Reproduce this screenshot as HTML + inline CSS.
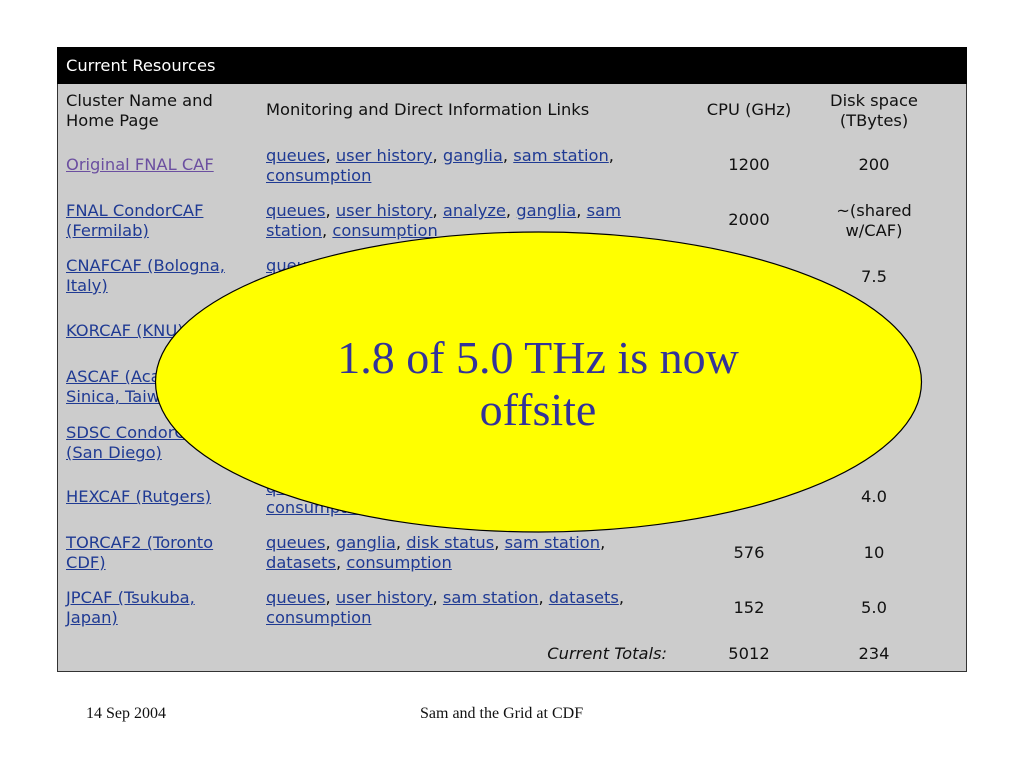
<!DOCTYPE html>
<html><head><meta charset="utf-8"><style>
body{margin:0;width:1023px;height:767px;background:#fff;position:relative;overflow:hidden;font-family:"DejaVu Sans","Liberation Sans",sans-serif;font-size:16.3px;line-height:20px;color:#111}
.box{position:absolute;left:57px;top:47px;width:910px;height:625px;background:#cccccc;border:1px solid #333;box-sizing:border-box}
.hd{position:absolute;left:57px;top:47px;width:910px;height:37px;background:#000;color:#fff}
.t{position:absolute;white-space:nowrap}
a{color:#1f3a93;text-decoration:underline}
a.v{color:#6b4fa0}
.c{text-align:center;width:120px}
.ft{position:absolute;font-family:"Liberation Serif",serif;font-size:16px;top:704px}
</style></head><body>
<div class="box"></div>
<div class="hd"><div class="t" style="left:9px;top:9px">Current Resources</div></div>

<div class="t" style="left:66px;top:91px">Cluster Name and<br>Home Page</div>
<div class="t" style="left:266px;top:100px">Monitoring and Direct Information Links</div>
<div class="t c" style="left:689px;top:100px">CPU (GHz)</div>
<div class="t c" style="left:814px;top:91px">Disk space<br>(TBytes)</div>

<div class="t" style="left:66px;top:155px"><a class="v">Original FNAL CAF</a></div>
<div class="t" style="left:266px;top:146px"><a>queues</a>, <a>user history</a>, <a>ganglia</a>, <a>sam station</a>,<br><a>consumption</a></div>
<div class="t c" style="left:689px;top:155px">1200</div>
<div class="t c" style="left:814px;top:155px">200</div>

<div class="t" style="left:66px;top:201px"><a>FNAL CondorCAF</a><br><a>(Fermilab)</a></div>
<div class="t" style="left:266px;top:201px"><a>queues</a>, <a>user history</a>, <a>analyze</a>, <a>ganglia</a>, <a>sam</a><br><a>station</a>, <a>consumption</a></div>
<div class="t c" style="left:689px;top:210px">2000</div>
<div class="t c" style="left:814px;top:201px">~(shared<br>w/CAF)</div>

<div class="t" style="left:66px;top:256px"><a>CNAFCAF (Bologna,</a><br><a>Italy)</a></div>
<div class="t" style="left:266px;top:256px"><a>queues</a></div>
<div class="t c" style="left:814px;top:267px">7.5</div>

<div class="t" style="left:66px;top:321px"><a>KORCAF (KNU)</a></div>
<div class="t c" style="left:814px;top:321px">6</div>

<div class="t" style="left:66px;top:367px"><a>ASCAF (Academia</a><br><a>Sinica, Taiwan)</a></div>

<div class="t" style="left:66px;top:423px"><a>SDSC CondorCAF</a><br><a>(San Diego)</a></div>
<div class="t c" style="left:814px;top:432px">3.0</div>

<div class="t" style="left:66px;top:487px"><a>HEXCAF (Rutgers)</a></div>
<div class="t" style="left:266px;top:478px"><a>queues</a><br><a>consumption</a></div>
<div class="t c" style="left:814px;top:487px">4.0</div>

<div class="t" style="left:66px;top:533px"><a>TORCAF2 (Toronto</a><br><a>CDF)</a></div>
<div class="t" style="left:266px;top:533px"><a>queues</a>, <a>ganglia</a>, <a>disk status</a>, <a>sam station</a>,<br><a>datasets</a>, <a>consumption</a></div>
<div class="t c" style="left:689px;top:543px">576</div>
<div class="t c" style="left:814px;top:543px">10</div>

<div class="t" style="left:66px;top:588px"><a>JPCAF (Tsukuba,</a><br><a>Japan)</a></div>
<div class="t" style="left:266px;top:588px"><a>queues</a>, <a>user history</a>, <a>sam station</a>, <a>datasets</a>,<br><a>consumption</a></div>
<div class="t c" style="left:689px;top:598px">152</div>
<div class="t c" style="left:814px;top:598px">5.0</div>

<div class="t" style="right:356px;top:644px;font-style:italic">Current Totals:</div>
<div class="t c" style="left:689px;top:644px">5012</div>
<div class="t c" style="left:814px;top:644px">234</div>

<svg style="position:absolute;left:0;top:0" width="1023" height="767">
<ellipse cx="538.5" cy="382" rx="383" ry="150" fill="#ffff00" stroke="#000" stroke-width="1.2"/>
<text x="538" y="373" text-anchor="middle" font-family="Liberation Serif, serif" font-size="46" fill="#333399">1.8 of 5.0 THz is now</text>
<text x="538" y="425" text-anchor="middle" font-family="Liberation Serif, serif" font-size="46" fill="#333399">offsite</text>
</svg>

<div class="ft" style="left:86px">14 Sep 2004</div>
<div class="ft" style="left:420px">Sam and the Grid at CDF</div>
</body></html>
